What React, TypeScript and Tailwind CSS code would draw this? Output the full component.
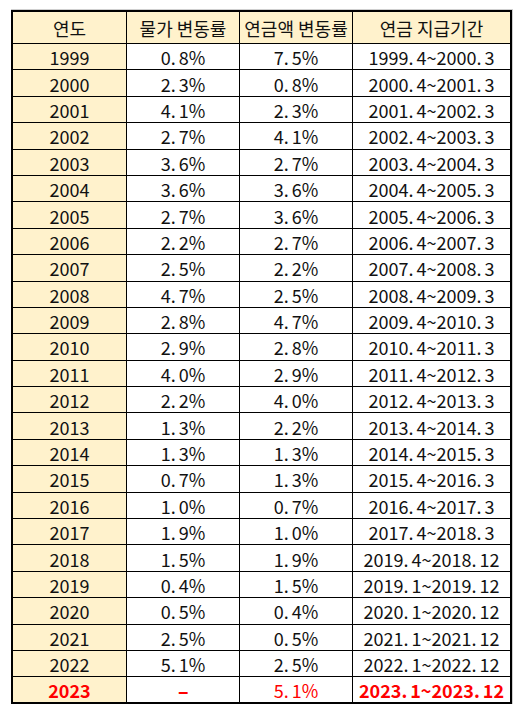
import React from "react";

type Row = [string, string, string, string];

const rows: Row[] = [
  ["1999", "0.8%", "7.5%", "1999.4~2000.3"],
  ["2000", "2.3%", "0.8%", "2000.4~2001.3"],
  ["2001", "4.1%", "2.3%", "2001.4~2002.3"],
  ["2002", "2.7%", "4.1%", "2002.4~2003.3"],
  ["2003", "3.6%", "2.7%", "2003.4~2004.3"],
  ["2004", "3.6%", "3.6%", "2004.4~2005.3"],
  ["2005", "2.7%", "3.6%", "2005.4~2006.3"],
  ["2006", "2.2%", "2.7%", "2006.4~2007.3"],
  ["2007", "2.5%", "2.2%", "2007.4~2008.3"],
  ["2008", "4.7%", "2.5%", "2008.4~2009.3"],
  ["2009", "2.8%", "4.7%", "2009.4~2010.3"],
  ["2010", "2.9%", "2.8%", "2010.4~2011.3"],
  ["2011", "4.0%", "2.9%", "2011.4~2012.3"],
  ["2012", "2.2%", "4.0%", "2012.4~2013.3"],
  ["2013", "1.3%", "2.2%", "2013.4~2014.3"],
  ["2014", "1.3%", "1.3%", "2014.4~2015.3"],
  ["2015", "0.7%", "1.3%", "2015.4~2016.3"],
  ["2016", "1.0%", "0.7%", "2016.4~2017.3"],
  ["2017", "1.9%", "1.0%", "2017.4~2018.3"],
  ["2018", "1.5%", "1.9%", "2019.4~2018.12"],
  ["2019", "0.4%", "1.5%", "2019.1~2019.12"],
  ["2020", "0.5%", "0.4%", "2020.1~2020.12"],
  ["2021", "2.5%", "0.5%", "2021.1~2021.12"],
  ["2022", "5.1%", "2.5%", "2022.1~2022.12"],
];

function Dotted({ text }: { text: string }) {
  const parts = text.split(".");
  return (
    <span>
      {parts.map((p, i) => (
        <React.Fragment key={i}>
          {p}
          {i < parts.length - 1 && <span className="mr-[3px]">.</span>}
        </React.Fragment>
      ))}
    </span>
  );
}

const font = { fontFamily: '"Noto Sans CJK KR", "Noto Sans", sans-serif' };

export default function App() {
  const cellBase =
    "flex items-center justify-center border-b border-r border-black text-[18px] leading-none";
  const black = "text-[#111111]";
  const red = "text-[#ff0000]";
  return (
    <div className="w-[522px] h-[714px] bg-white" style={font}>
      <div className="pl-[11px] pt-[9px]">
        <div className="w-[502px] border-t border-r border-[#cfcfcf]">
          <div className="w-[501px] border-2 border-black grid grid-cols-[114px_113px_113px_157px]">
            {["연도", "물가 변동률", "연금액 변동률", "연금 지급기간"].map((h, i) => (
              <div
                key={h}
                className={`${cellBase} ${black} h-[32px] bg-[#fff2cc] ${i === 3 ? "border-r-0" : ""}`}
              >
                {h}
              </div>
            ))}
            {rows.map((r) => (
              <React.Fragment key={r[0]}>
                <div className={`${cellBase} ${black} h-[26.4px] bg-[#fff2cc] pt-[1px]`}>{r[0]}</div>
                <div className={`${cellBase} ${black} h-[26.4px] bg-white pt-[1px]`}>
                  <Dotted text={r[1]} />
                </div>
                <div className={`${cellBase} ${black} h-[26.4px] bg-white pt-[1px]`}>
                  <Dotted text={r[2]} />
                </div>
                <div className={`${cellBase} ${black} h-[26.4px] bg-white pt-[1px] border-r-0`}>
                  <Dotted text={r[3]} />
                </div>
              </React.Fragment>
            ))}
            <div className={`${cellBase} ${red} h-[25px] bg-[#fff2cc] border-b-0 font-bold`}>
              2023
            </div>
            <div className={`${cellBase} ${red} h-[25px] bg-white border-b-0 font-bold`}>
              <span className="inline-block scale-x-[1.8]">-</span>
            </div>
            <div className={`${cellBase} ${red} h-[25px] bg-white border-b-0`}>
              <Dotted text="5.1%" />
            </div>
            <div className={`${cellBase} ${red} h-[25px] bg-white border-b-0 border-r-0 font-bold`}>
              <Dotted text="2023.1~2023.12" />
            </div>
          </div>
        </div>
      </div>
    </div>
  );
}
